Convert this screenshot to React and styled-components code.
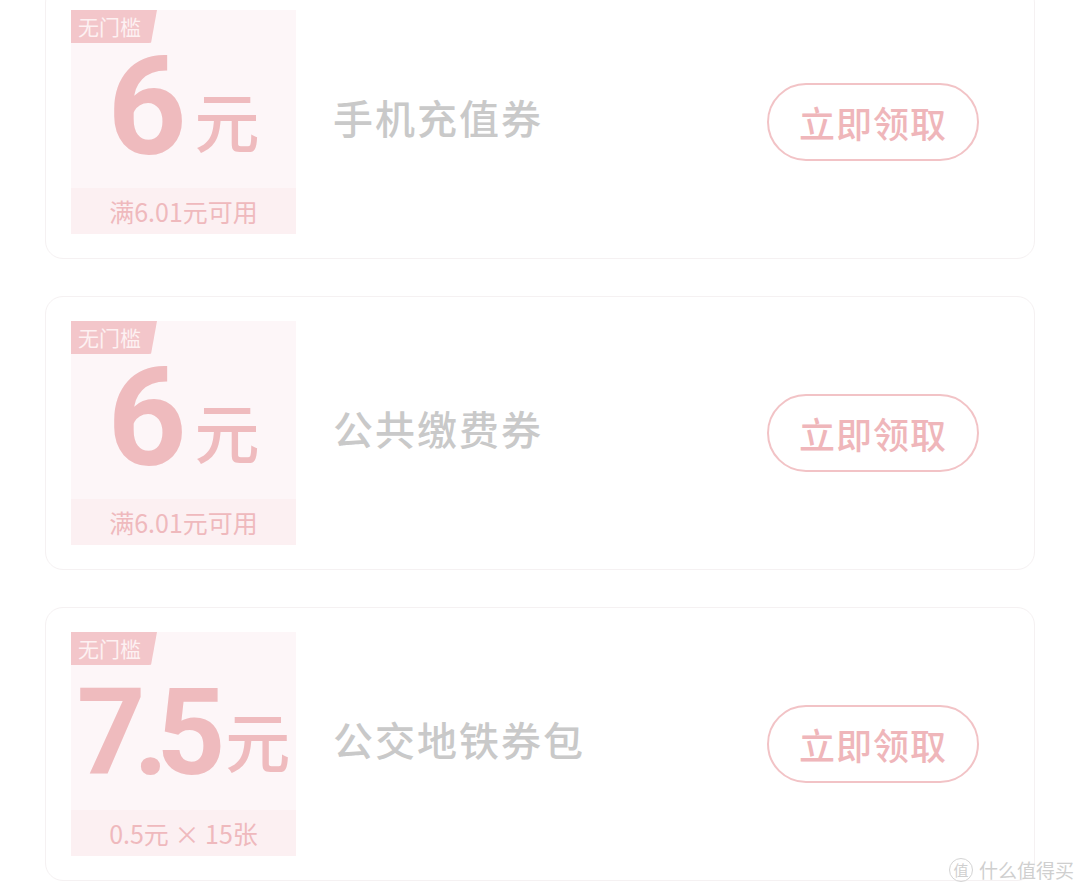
import React from "react";
import styled, { createGlobalStyle } from "styled-components";

const Global = createGlobalStyle`
  html, body { margin: 0; padding: 0; background: #ffffff; }
  body { font-family: "Noto Sans CJK SC", "Noto Sans", sans-serif; overflow: hidden; }
`;

const Page = styled.div`
  position: relative;
  width: 1080px;
  height: 892px;
  overflow: hidden;
  background: #fff;
`;

const List = styled.div`
  display: flex;
  flex-direction: column;
  gap: 37px;
  padding: 0 45px;
  margin-top: -15px;
`;

const Card = styled.div`
  display: flex;
  align-items: center;
  height: 274px;
  box-sizing: border-box;
  padding: 24px 55px 24px 25px;
  border: 1px solid #f5f1f2;
  border-radius: 18px;
  background: #fff;
`;

const Coupon = styled.div`
  width: 225px;
  height: 224px;
  flex: none;
  display: flex;
  flex-direction: column;
  background: #fdf6f8;
`;

const Tag = styled.div`
  align-self: flex-start;
  width: 86px;
  box-sizing: border-box;
  height: 33px;
  line-height: 33px;
  padding-left: 7px;
  font-size: 21px;
  color: #fdf1f2;
  background: #f3c6ca;
  border-bottom-right-radius: 8px;
  clip-path: polygon(0 0, 100% 0, calc(100% - 6px) 100%, 0 100%);
`;

const Amount = styled.div`
  height: 145px;
  display: flex;
  align-items: baseline;
  justify-content: center;
  color: #efbbbe;
`;

const Num = styled.span`
  font-family: "Roboto", "Inter", sans-serif;
  font-weight: 700;
  font-size: ${(p) => (p.$small ? "120px" : "138px")};
  line-height: 0.75;
  letter-spacing: ${(p) => (p.$small ? "-12px" : "0")};
  margin-top: ${(p) => (p.$small ? "23px" : "13px")};
`;

const Unit = styled.span`
  position: relative;
  top: -7px;
  font-size: 65px;
  font-weight: 500;
  line-height: 1;
  margin-left: ${(p) => (p.$small ? "12px" : "8px")};
`;

const Foot = styled.div`
  flex: 1;
  display: flex;
  align-items: center;
  justify-content: center;
  background: #fcf0f2;
  color: #efb9bd;
  font-size: 25px;
`;

const Title = styled.div`
  flex: 1;
  margin-left: 37px;
  margin-top: -10px;
  font-size: 40px;
  font-weight: 500;
  color: #c9c9c9;
  letter-spacing: 2px;
`;

const Button = styled.button`
  width: 212px;
  height: 78px;
  flex: none;
  box-sizing: border-box;
  border: 2px solid #f2c3c6;
  border-radius: 40px;
  background: #fff;
  color: #efb6ba;
  font-family: "Noto Sans CJK SC", sans-serif;
  font-size: 36px;
  font-weight: 500;
  letter-spacing: 1px;
  padding: 0;
`;

const Watermark = styled.div`
  position: absolute;
  right: 6px;
  bottom: 9px;
  display: flex;
  align-items: center;
  gap: 6px;
  color: #cfcfcf;
  font-size: 19px;
`;

const Badge = styled.span`
  width: 22px;
  height: 22px;
  border: 1.5px solid #d4d4d4;
  border-radius: 50%;
  display: flex;
  align-items: center;
  justify-content: center;
  font-size: 15px;
  color: #cfcfcf;
`;

const coupons = [
  { num: "6", foot: "满6.01元可用", title: "手机充值券" },
  { num: "6", foot: "满6.01元可用", title: "公共缴费券" },
  { num: "7.5", foot: "0.5元 × 15张", title: "公交地铁券包", small: true },
];

export default function App() {
  return (
    <Page>
      <Global />
      <List>
        {coupons.map((c, i) => (
          <Card key={i}>
            <Coupon>
              <Tag>无门槛</Tag>
              <Amount>
                <Num $small={c.small}>{c.num}</Num>
                <Unit $small={c.small}>元</Unit>
              </Amount>
              <Foot>{c.foot}</Foot>
            </Coupon>
            <Title>{c.title}</Title>
            <Button>立即领取</Button>
          </Card>
        ))}
      </List>
      <Watermark>
        <Badge>值</Badge>
        什么值得买
      </Watermark>
    </Page>
  );
}
